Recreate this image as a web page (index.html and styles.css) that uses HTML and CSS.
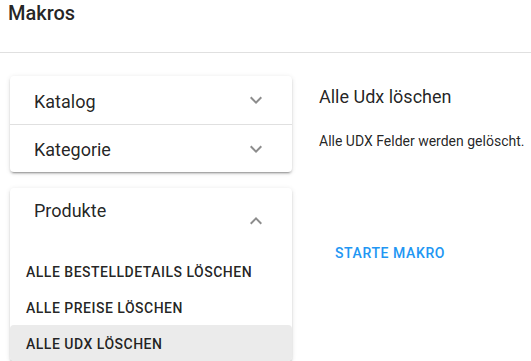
FILE: index.html
```html
<!DOCTYPE html>
<html lang="de">
<head>
<meta charset="utf-8">
<title>Makros</title>
<link rel="stylesheet" href="styles.css">
</head>
<body>
<header class="topbar"><h1 class="title">Makros</h1></header>
<main class="main">
  <div class="left">
    <section class="card">
      <div class="panel-header">
        <span class="panel-title">Katalog</span>
        <svg class="chev" viewBox="0 0 24 24" width="24" height="24"><path d="M7.41 8.59L12 13.17l4.59-4.58L18 10l-6 6-6-6 1.41-1.41z"/></svg>
      </div>
      <div class="panel-header">
        <span class="panel-title">Kategorie</span>
        <svg class="chev" viewBox="0 0 24 24" width="24" height="24"><path d="M7.41 8.59L12 13.17l4.59-4.58L18 10l-6 6-6-6 1.41-1.41z"/></svg>
      </div>
    </section>
    <section class="card card-open">
      <div class="panel-header panel-header-open">
        <span class="panel-title panel-title-open">Produkte</span>
        <svg class="chev" viewBox="0 0 24 24" width="24" height="24"><path d="M7.41 15.41L12 10.83l4.59 4.58L18 14l-6-6-6 6z"/></svg>
      </div>
      <ul class="items">
        <li class="item">Alle Bestelldetails löschen</li>
        <li class="item">Alle Preise löschen</li>
        <li class="item item-active">Alle UDX löschen</li>
      </ul>
    </section>
  </div>
  <div class="right">
    <h2 class="detail-title">Alle Udx löschen</h2>
    <p class="detail-text">Alle UDX Felder werden gelöscht.</p>
    <button class="btn">Starte Makro</button>
  </div>
</main>
</body>
</html>
```
FILE: styles.css
```css
* { box-sizing: border-box; }
html, body { margin: 0; padding: 0; background: #fff; }
body {
  font-family: Roboto, "Noto Sans", sans-serif;
  color: rgba(0,0,0,.87);
  overflow: hidden;
}
.topbar {
  height: 53px;
  border-bottom: 1px solid #e0e0e0;
  padding: 1px 8px 0;
}
.title {
  margin: 0;
  font-size: 20px;
  line-height: 24px;
  font-weight: 500;
  letter-spacing: 0;
}
.main {
  display: flex;
  align-items: flex-start;
  padding: 23px 0 0 10px;
}
.left {
  width: 282px;
  display: flex;
  flex-direction: column;
  gap: 16px;
}
.card {
  background: #fff;
  border-radius: 4px;
  box-shadow: 0 3px 1px -2px rgba(0,0,0,.2), 0 2px 2px 0 rgba(0,0,0,.14), 0 1px 5px 0 rgba(0,0,0,.12);
}
.panel-header {
  height: 48px;
  display: flex;
  align-items: center;
  justify-content: space-between;
  padding: 0 24px 0 24px;
}
.panel-header + .panel-header { border-top: 1px solid #e0e0e0; }
.panel-title {
  font-size: 18px;
  line-height: 24px;
  padding-top: 3px;
}
.panel-header-open {
  height: 65px;
  align-items: flex-start;
}
.panel-title-open { padding-top: 11px; }
.panel-header-open .chev { margin-top: 21px; }
.chev { fill: rgba(0,0,0,.45); flex: none; }
.items {
  list-style: none;
  margin: 0;
  padding: 0 0 0;
}
.item {
  height: 36px;
  display: flex;
  align-items: center;
  padding: 1px 16px 0;
  font-size: 14px;
  font-weight: 500;
  letter-spacing: 0.5px;
  text-transform: uppercase;
  border-radius: 4px;
}
.item-active { background: #ebebeb; }
.right {
  margin-left: 27px;
  padding-top: 9px;
}
.detail-title {
  margin: 0;
  font-size: 18px;
  line-height: 24px;
  font-weight: 400;
}
.detail-text {
  margin: 22px 0 0;
  font-size: 14px;
  line-height: 20px;
}
.btn {
  margin-top: 84px;
  height: 36px;
  padding: 0 16px;
  border: 0;
  background: transparent;
  font-family: Roboto, sans-serif;
  font-size: 14px;
  font-weight: 500;
  letter-spacing: 0.6px;
  text-transform: uppercase;
  color: #2196f3;
}
```
